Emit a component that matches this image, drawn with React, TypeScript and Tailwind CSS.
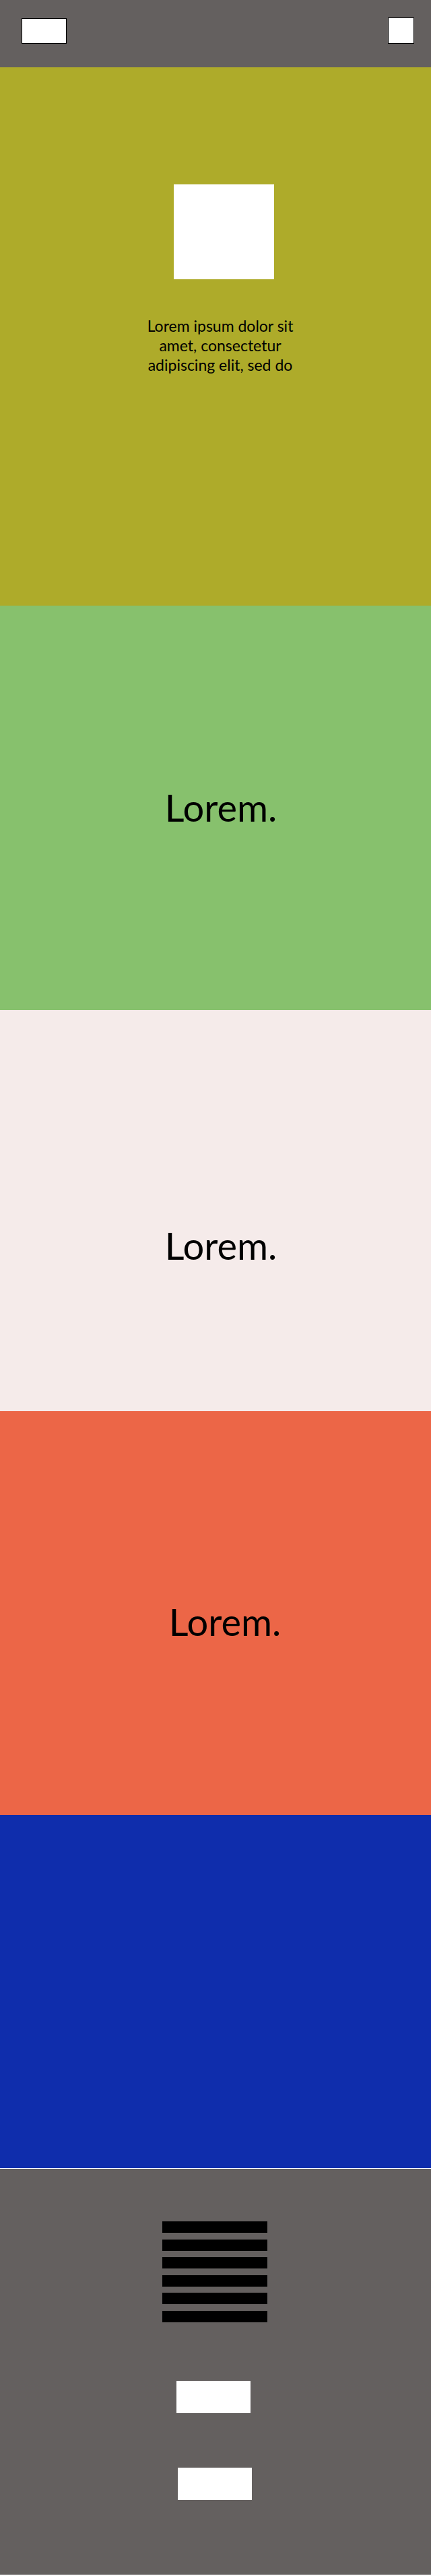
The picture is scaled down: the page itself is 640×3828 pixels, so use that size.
const bars = [0, 1, 2, 3, 4, 5];

export default function App() {
  return (
    <div className="w-full bg-white pb-[2px] font-['Lato',sans-serif] text-black">
      <header className="flex h-[100px] items-end justify-between bg-[#64605f] pr-[25px] pb-[35px] pl-8">
        <div className="h-[38px] w-[67px] border border-black bg-white" />
        <div className="h-[39px] w-[39px] border border-black bg-white" />
      </header>

      <main>
        <section className="flex h-[800px] flex-col items-center bg-[#aeab2a] pt-[174px] pl-[14px]">
          <div className="ml-[11px] h-[141px] w-[149px] bg-white" />
          <p className="mt-[55px] w-[232px] text-center text-[23px] leading-[29px]">
            Lorem ipsum dolor sit amet, consectetur adipiscing elit, sed do
          </p>
        </section>

        <section className="flex h-[601px] justify-center bg-[#87c16d] pt-[268px] pl-4">
          <h2 className="text-[56px] leading-[64px]">Lorem.</h2>
        </section>

        <section className="flex h-[596px] justify-center bg-[#f5ebea] pt-[318px] pl-4">
          <h2 className="text-[56px] leading-[64px]">Lorem.</h2>
        </section>

        <section className="flex h-[600px] justify-center bg-[#ec6647] pt-[281px] pl-7">
          <h2 className="text-[56px] leading-[64px]">Lorem.</h2>
        </section>

        <section className="h-[525px] bg-[#0f2dac]" />
      </main>

      <footer className="flex h-[604px] flex-col items-center border-t border-white bg-[#64605f] pt-[78px]">
        <div className="mr-[2px] flex h-[150px] w-[156px] flex-col justify-between">
          {bars.map((bar) => (
            <div key={bar} className="h-[17px] bg-black" />
          ))}
        </div>
        <div className="mt-[87px] mr-[6px] h-12 w-[110px] bg-white" />
        <div className="mt-[81px] mr-[2px] h-12 w-[110px] bg-white" />
      </footer>
    </div>
  );
}
